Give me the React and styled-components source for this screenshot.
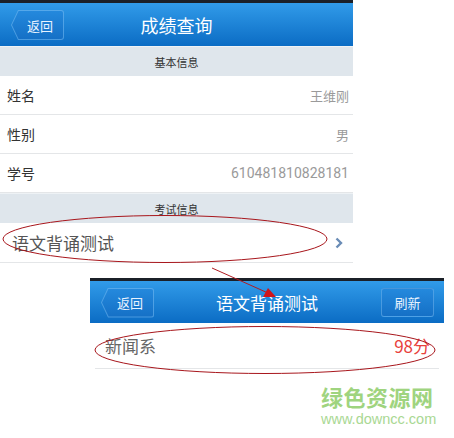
import React from 'react';
import styled, { createGlobalStyle } from 'styled-components';

const Global = createGlobalStyle`
  body {
    margin: 0;
    background: #fff;
    font-family: "Noto Sans CJK SC", "Noto Sans", sans-serif;
  }
`;

const Page = styled.div`
  position: relative;
  width: 454px;
  height: 438px;
  overflow: hidden;
`;

const Screen = styled.div`
  width: ${p => p.width}px;
  margin-left: ${p => p.left || 0}px;
  margin-top: ${p => p.top || 0}px;
  background: #fff;
`;

const Header = styled.div`
  height: ${p => p.h}px;
  box-sizing: border-box;
  border-top: 3px solid #1b2028;
  background: linear-gradient(#319be9, #0b6cc4);
  display: flex;
  align-items: center;
  justify-content: space-between;
  padding: 0 10px 0 11px;
  position: relative;
`;

const Title = styled.div`
  position: absolute;
  left: 0;
  right: 0;
  text-align: center;
  color: #fff;
  font-size: ${p => p.size || 17}px;
  pointer-events: none;
`;

const BackEdge = styled.div`
  width: 53px;
  height: 30px;
  padding: 1px;
  box-sizing: border-box;
  clip-path: polygon(0 50%, 7px 0, 100% 0, 100% 100%, 7px 100%);
  background: rgba(120, 185, 240, 0.55);
  border-radius: 0 3px 3px 0;
  margin-top: 1px;
`;

const BackButton = styled.div`
  height: 100%;
  clip-path: polygon(0 50%, 6.6px 0, 100% 0, 100% 100%, 6.6px 100%);
  background: linear-gradient(#2489dd, #1570c6);
  border-radius: 0 2px 2px 0;
  color: #e8f3ff;
  font-size: 13px;
  display: flex;
  align-items: center;
  justify-content: center;
  padding-left: 5px;
`;

const RightButton = styled.div`
  width: 53px;
  height: 29px;
  border-radius: 3px;
  background: linear-gradient(#2489dd, #1570c6);
  border: 1px solid rgba(120, 185, 240, 0.5);
  box-sizing: border-box;
  color: #e8f3ff;
  font-size: 13px;
  display: flex;
  align-items: center;
  justify-content: center;
`;

const Section = styled.div`
  height: 30px;
  background: #dfe6ec;
  border-top: 1px solid #eef2f5;
  box-sizing: border-box;
  color: #333;
  font-size: 11px;
  display: flex;
  align-items: center;
  justify-content: center;
`;

const Row = styled.div`
  height: ${p => p.h || 39}px;
  display: flex;
  align-items: center;
  justify-content: space-between;
  padding: 0 ${p => p.pr || 4}px 0 ${p => p.pl || 7}px;
  border-bottom: 1px solid #e4e6e8;
  margin: 0 ${p => p.inset || 0}px;
  box-sizing: border-box;
`;

const Label = styled.span`
  color: ${p => p.color || '#333'};
  font-size: ${p => p.size || 14}px;
`;

const Value = styled.span`
  color: ${p => p.color || '#9a9a9a'};
  font-size: ${p => p.size || 13}px;
  font-family: ${p => (p.digits ? 'Roboto, "Noto Sans", sans-serif' : 'inherit')};
`;

const Watermark = styled.div`
  margin: 15px 0 0 321px;
  display: flex;
  flex-direction: column;
  align-items: flex-start;
`;

const MarkTitle = styled.div`
  color: #9fd47f;
  font-size: 22px;
  font-weight: bold;
  line-height: 24px;
  letter-spacing: 0.5px;
`;

const MarkUrl = styled.div`
  margin-top: 3px;
  color: #a9d893;
  font-family: "Liberation Sans", Arial, sans-serif;
  font-size: 14.5px;
  line-height: 17px;
`;

const Overlay = styled.svg`
  position: absolute;
  left: 0;
  top: 0;
  pointer-events: none;
`;

const Chevron = () => (
  <svg width="10" height="12" viewBox="0 0 10 12">
    <path d="M2.5 1.5 L7 6 L2.5 10.5" fill="none" stroke="#6a8cb6" strokeWidth="2.4" />
  </svg>
);

export default function App() {
  return (
    <Page>
      <Global />
      <Screen width={353}>
        <Header h={46}>
          <BackEdge><BackButton>返回</BackButton></BackEdge>
          <Title size={18}>成绩查询</Title>
        </Header>
        <Section>基本信息</Section>
        <Row>
          <Label>姓名</Label>
          <Value>王维刚</Value>
        </Row>
        <Row>
          <Label>性别</Label>
          <Value>男</Value>
        </Row>
        <Row>
          <Label>学号</Label>
          <Value digits size={14}>610481810828181</Value>
        </Row>
        <Section>考试信息</Section>
        <Row h={40} pl={12} pr={9}>
          <Label size={17} color="#555">语文背诵测试</Label>
          <Chevron />
        </Row>
      </Screen>

      <Screen width={354} left={90} top={15}>
        <Header h={45}>
          <BackEdge><BackButton>返回</BackButton></BackEdge>
          <Title>语文背诵测试</Title>
          <RightButton>刷新</RightButton>
        </Header>
        <Row h={46} pl={10} pr={9} inset={5}>
          <Label size={17} color="#666">新闻系</Label>
          <Value size={17} color="#e8413c">98分</Value>
        </Row>
      </Screen>

      <Watermark>
        <MarkTitle>绿色资源网</MarkTitle>
        <MarkUrl>www.downcc.com</MarkUrl>
      </Watermark>

      <Overlay width="454" height="438" viewBox="0 0 454 438">
        <ellipse cx="165" cy="239" rx="162" ry="23.5" fill="none" stroke="#a8161c" strokeWidth="1" />
        <ellipse cx="265" cy="350" rx="170" ry="23.5" fill="none" stroke="#a8161c" strokeWidth="1" />
        <line x1="212" y1="268" x2="268" y2="293" stroke="#b01c22" strokeWidth="1" />
        <polygon points="276,297 263,297 268,288" fill="#d0141a" />
      </Overlay>
    </Page>
  );
}
